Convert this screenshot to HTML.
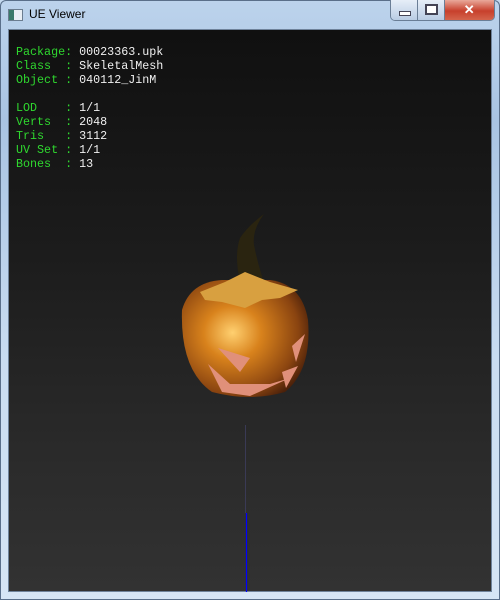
<!DOCTYPE html>
<html><head><style>
*{margin:0;padding:0}
body{width:500px;height:600px;overflow:hidden;background:#c5daf0;position:relative;font-family:"Liberation Sans",sans-serif}
.frame{position:absolute;left:0;top:0;width:500px;height:600px;background:linear-gradient(180deg,#bcd3ec 0%,#a9c4e3 20%,#c9dcf1 60%,#d6e5f5 100%);border-radius:6px 6px 0 0;box-shadow:inset 0 0 0 1px #5a6f8a}
.title{position:absolute;left:29px;top:7px;font-size:12px;color:#000}
.ico{position:absolute;left:8px;top:9px;width:13px;height:10px;border:1px solid #6b7d90;background:linear-gradient(90deg,#3a7a6a 0 40%,#e8eef4 40%)}
.btns{position:absolute;left:390px;top:0;width:103px;height:20px;border:1px solid #6a7e96;border-top:none;border-radius:0 0 5px 5px;overflow:hidden;display:flex}
.b{height:20px;background:linear-gradient(#e6eef8,#b9cce3);border-right:1px solid #6a7e96;position:relative}
.x{background:linear-gradient(#e9a99a,#c7402c 55%,#d4644c)}
.client{position:absolute;left:8px;top:29px;width:484px;height:563px;background:linear-gradient(180deg,#101010 0%,#1c1c1c 40%,#2a2a2a 75%,#323232 100%);border:1px solid #6f839b;box-sizing:border-box}
pre{position:absolute;left:16px;top:45px;font-family:"Liberation Mono",monospace;font-size:11.7px;line-height:14px;color:#f0f0f0}
.g{color:#2fd82f}
</style></head><body>
<div class="frame"></div>
<div class="ico"></div>
<div class="title">UE Viewer</div>
<div class="btns">
 <div class="b" style="width:26px"><div style="position:absolute;left:8px;top:11px;width:10px;height:3px;background:#fff;border:1px solid #445"></div></div>
 <div class="b" style="width:26px"><div style="position:absolute;left:7px;top:4px;width:9px;height:7px;border:2px solid #445;background:#fff"></div></div>
 <div class="b x" style="width:50px;border:none;color:#fff;font-weight:bold;font-size:13px;text-align:center;line-height:19px">✕</div>
</div>
<div class="client">
<svg width="484" height="563" style="position:absolute;left:-1px;top:-1px" viewBox="8 29 484 563">
<defs>
<radialGradient id="p" cx="0.4" cy="0.45" r="0.65"><stop offset="0" stop-color="#ffd070"/><stop offset="0.35" stop-color="#d8821c"/><stop offset="0.8" stop-color="#8a4410"/><stop offset="1" stop-color="#4a200a"/></radialGradient>
</defs>
<line x1="245.5" y1="425" x2="245.5" y2="513" stroke="#3a3a55" stroke-width="1"/>
<line x1="246.5" y1="513" x2="246.5" y2="592" stroke="#0000ff" stroke-width="1.2"/>
<path d="M182 310 Q190 282 222 280 L270 280 Q302 284 308 320 Q312 370 285 392 Q250 402 212 392 Q180 370 182 310Z" fill="url(#p)"/>
<path d="M240 282 Q234 255 240 238 Q248 226 264 214 Q252 230 254 245 Q258 265 264 282Z" fill="#2a2410"/>
<path d="M200 292 L225 282 L245 272 L270 282 L298 290 L280 298 L262 300 L245 308 L222 302 L205 300Z" fill="#d8a040"/>
<path d="M218 348 L250 358 L240 372 Z M282 372 L298 366 L286 388 Z M208 364 L230 384 L270 384 L290 378 L250 396 L222 392Z M292 346 L305 334 L296 362Z" fill="#e0907a"/>
</svg>
</div>
<pre><span class="g">Package:</span> 00023363.upk
<span class="g">Class  :</span> SkeletalMesh
<span class="g">Object :</span> 040112_JinM

<span class="g">LOD    :</span> 1/1
<span class="g">Verts  :</span> 2048
<span class="g">Tris   :</span> 3112
<span class="g">UV Set :</span> 1/1
<span class="g">Bones  :</span> 13</pre>
</body></html>
